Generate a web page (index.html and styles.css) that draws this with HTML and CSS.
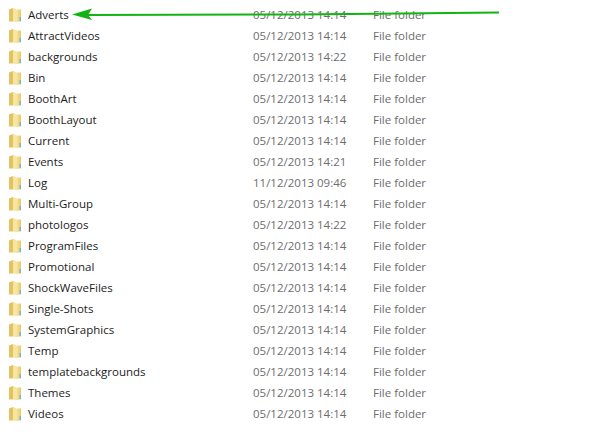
FILE: index.html
```html
<!DOCTYPE html>
<html>

<head>
  <meta charset="UTF-8">
  <title>Folder list</title>
  <link rel="stylesheet" href="styles.css">
</head>

<body>
  <svg width="0" height="0" class="defs">
    <defs>
      <linearGradient id="folderFill" x1="0" y1="0" x2="1" y2="0">
        <stop offset="0" stop-color="#f7e9a8" />
        <stop offset="1" stop-color="#e8c866" />
      </linearGradient>
      <symbol id="folder" viewBox="0 0 14 16">
        <path d="M1 2.5 L5 1 L5 14.5 L1 14.5 Z" fill="#e3c262" />
        <path d="M5 1 L8 2 L8 15 L5 14.5 Z" fill="#f6e6a0" />
        <path d="M8 2.5 L13 2.5 L13 14.5 L8 15 Z" fill="url(#folderFill)" />
        <path d="M11.5 10 L13 10 L13 14 L11.5 14 Z" fill="#6fb6d8" />
      </symbol>
    </defs>
  </svg>

  <div class="list" id="list"></div>

  <!-- green arrow drawn on top of the list -->
  <svg class="arrow" width="609" height="30">
    <path d="M88 15 L300 14.5 L499 12.5" stroke="#12b312" stroke-width="2" fill="none" />
    <path d="M72 14.5 L92 8.5 L88 15 L92 20 Z" fill="#12b312" />
  </svg>

  <script>
    const rows = [
      ['Adverts', '05/12/2013 14:14'],
      ['AttractVideos', '05/12/2013 14:14'],
      ['backgrounds', '05/12/2013 14:22'],
      ['Bin', '05/12/2013 14:14'],
      ['BoothArt', '05/12/2013 14:14'],
      ['BoothLayout', '05/12/2013 14:14'],
      ['Current', '05/12/2013 14:14'],
      ['Events', '05/12/2013 14:21'],
      ['Log', '11/12/2013 09:46'],
      ['Multi-Group', '05/12/2013 14:14'],
      ['photologos', '05/12/2013 14:22'],
      ['ProgramFiles', '05/12/2013 14:14'],
      ['Promotional', '05/12/2013 14:14'],
      ['ShockWaveFiles', '05/12/2013 14:14'],
      ['Single-Shots', '05/12/2013 14:14'],
      ['SystemGraphics', '05/12/2013 14:14'],
      ['Temp', '05/12/2013 14:14'],
      ['templatebackgrounds', '05/12/2013 14:14'],
      ['Themes', '05/12/2013 14:14'],
      ['Videos', '05/12/2013 14:14']
    ];

    const list = document.getElementById('list');
    rows.forEach(item => {
      const row = document.createElement('div');
      row.className = 'row';
      row.innerHTML =
        '<svg class="icon"><use href="#folder"></use></svg>' +
        '<span class="name">' + item[0] + '</span>' +
        '<span class="date">' + item[1] + '</span>' +
        '<span class="type">File folder</span>';
      list.appendChild(row);
    });
  </script>
</body>

</html>
```

FILE: styles.css
```css
html,
body {
  margin: 0;
  background: #fff;
}

body {
  width: 609px;
  height: 433px;
  overflow: hidden;
  position: relative;
  font-family: 'Open Sans', 'Noto Sans', sans-serif;
  font-size: 11.5px;
}

.defs {
  display: block;
  height: 0;
}

.list {
  padding-top: 4px;
}

.row {
  display: flex;
  align-items: center;
  height: 21px;
  padding-left: 8px;
}

.icon {
  width: 14px;
  height: 16px;
  margin-right: 6px;
  flex: none;
}

.name {
  width: 225px;
  color: #1c1c1c;
}

.date {
  width: 120px;
  color: #6d6d6d;
}

.type {
  color: #6d6d6d;
}

.arrow {
  position: absolute;
  left: 0;
  top: 0;
}
```
